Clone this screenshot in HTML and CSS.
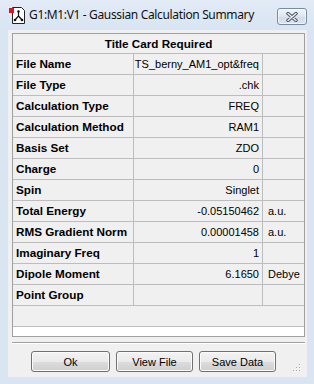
FILE: index.html
```html
<!DOCTYPE html>
<html>
<head>
<meta charset="utf-8">
<link rel="stylesheet" href="styles.css">
</head>
<body>
<div class="window">
  <div class="titlebar">
    <svg class="appicon" width="16" height="17" viewBox="0 0 16 17">
      <path d="M3.5 0.5 H12.5 L15.5 3.5 V16.5 H3.5 Z" fill="#fff" stroke="#222" stroke-width="1"/>
      <rect x="0" y="1" width="5" height="5" fill="#e0141e"/>
      <circle cx="9.5" cy="4.5" r="1.2" fill="#111"/>
      <path d="M9.5 4.5 V9 L6 13 M9.5 9 L13 13" stroke="#111" stroke-width="1.2" fill="none"/>
      <circle cx="6" cy="13" r="1.3" fill="#111"/>
      <circle cx="13" cy="13" r="1.3" fill="#111"/>
    </svg>
    <span class="title">G1:M1:V1 - Gaussian Calculation Summary</span>
    <div class="close">
      <svg width="12" height="10" viewBox="0 0 12 10">
        <path d="M2 1.5 L10 8.5 M10 1.5 L2 8.5" stroke="#4c5868" stroke-width="3.4" stroke-linecap="round"/>
        <path d="M2 1.5 L10 8.5 M10 1.5 L2 8.5" stroke="#eef1f5" stroke-width="1.4" stroke-linecap="round"/>
      </svg>
    </div>
  </div>
  <div class="client">
    <div class="grid">
      <div class="row title-row"><div class="cell span">Title Card Required</div></div>
      <div class="row"><div class="cell label">File Name</div><div class="cell value">TS_berny_AM1_opt&amp;freq</div><div class="cell unit"></div></div>
      <div class="row"><div class="cell label">File Type</div><div class="cell value">.chk</div><div class="cell unit"></div></div>
      <div class="row"><div class="cell label">Calculation Type</div><div class="cell value">FREQ</div><div class="cell unit"></div></div>
      <div class="row"><div class="cell label">Calculation Method</div><div class="cell value">RAM1</div><div class="cell unit"></div></div>
      <div class="row"><div class="cell label">Basis Set</div><div class="cell value">ZDO</div><div class="cell unit"></div></div>
      <div class="row"><div class="cell label">Charge</div><div class="cell value">0</div><div class="cell unit"></div></div>
      <div class="row"><div class="cell label">Spin</div><div class="cell value">Singlet</div><div class="cell unit"></div></div>
      <div class="row"><div class="cell label">Total Energy</div><div class="cell value">-0.05150462</div><div class="cell unit">a.u.</div></div>
      <div class="row"><div class="cell label">RMS Gradient Norm</div><div class="cell value">0.00001458</div><div class="cell unit">a.u.</div></div>
      <div class="row"><div class="cell label">Imaginary Freq</div><div class="cell value">1</div><div class="cell unit"></div></div>
      <div class="row"><div class="cell label">Dipole Moment</div><div class="cell value">6.1650</div><div class="cell unit">Debye</div></div>
      <div class="row"><div class="cell label">Point Group</div><div class="cell value"></div><div class="cell unit"></div></div>
      <div class="row blank-row"><div class="cell span"></div></div>
    </div>
    <div class="separator"></div>
    <div class="buttons">
      <button class="btn btn-ok">Ok</button>
      <button class="btn btn-view">View File</button>
      <button class="btn btn-save">Save Data</button>
    </div>
    <svg class="grip" width="8" height="8" viewBox="0 0 8 8">
      <rect x="6" y="0" width="1" height="1" fill="#a8a8a8"/>
      <rect x="3" y="3" width="1" height="1" fill="#a8a8a8"/>
      <rect x="6" y="3" width="1" height="1" fill="#a8a8a8"/>
      <rect x="0" y="6" width="1" height="1" fill="#a8a8a8"/>
      <rect x="3" y="6" width="1" height="1" fill="#a8a8a8"/>
      <rect x="6" y="6" width="1" height="1" fill="#a8a8a8"/>
      <rect x="7" y="1" width="1" height="1" fill="#fff"/>
      <rect x="4" y="4" width="1" height="1" fill="#fff"/>
      <rect x="7" y="4" width="1" height="1" fill="#fff"/>
      <rect x="1" y="7" width="1" height="1" fill="#fff"/>
      <rect x="4" y="7" width="1" height="1" fill="#fff"/>
      <rect x="7" y="7" width="1" height="1" fill="#fff"/>
    </svg>
  </div>
</div>
</body>
</html>
```
FILE: styles.css
```css
html, body {
  margin: 0;
  padding: 0;
}
body {
  font-family: "Liberation Sans", Arial, sans-serif;
  color: #000;
}
.window {
  width: 314px;
  height: 384px;
  box-sizing: border-box;
  padding: 0 7px 7px 8px;
  background: #d9e5f3;
  display: flex;
  flex-direction: column;
}
.titlebar {
  height: 30px;
  flex: none;
  display: flex;
  align-items: flex-start;
  background: linear-gradient(#e2ebf6, #d9e5f3);
  margin: 0 -7px 0 -8px;
  padding: 0 7px 0 8px;
}
.appicon {
  margin-top: 7px;
  margin-left: 1px;
  flex: none;
}
.title {
  margin-left: 4px;
  margin-top: 6px;
  font-family: "Noto Sans", "Open Sans", sans-serif;
  font-size: 12px;
  letter-spacing: -0.35px;
  line-height: 18px;
  color: #111;
  white-space: nowrap;
  flex: 1;
}
.close {
  margin-top: 8px;
  width: 30px;
  height: 17px;
  box-sizing: border-box;
  border: 1px solid #7a8aa0;
  border-radius: 3px;
  background: linear-gradient(#f1f5fa, #dde6f0 50%, #d2dce9 51%, #dbe4ef);
  box-shadow: inset 0 0 0 1px rgba(255,255,255,0.6);
  display: flex;
  align-items: center;
  justify-content: center;
  flex: none;
}
.client {
  flex: 1;
  background: #f0f0f0;
  padding: 3px 2px 0 4px;
  position: relative;
  display: flex;
  flex-direction: column;
}
.grid {
  border: 1px solid #a0a0a0;
  background: #fff;
  height: 304px;
  box-sizing: border-box;
  flex: none;
}
.row {
  display: grid;
  grid-template-columns: 121px 129px 41px;
  height: 21px;
  box-sizing: border-box;
  border-bottom: 1px solid #bdbdbd;
  background: #f0f0f0;
}
.title-row {
  height: 20px;
  grid-template-columns: 1fr;
}
.blank-row {
  grid-template-columns: 1fr;
}
.cell {
  box-sizing: border-box;
  border-right: 1px solid #bdbdbd;
  line-height: 20px;
  font-size: 11px;
  white-space: nowrap;
  overflow: hidden;
}
.cell.unit, .cell.span {
  border-right: none;
}
.title-row .cell {
  line-height: 19px;
  font-weight: bold;
  font-size: 11.7px;
  text-align: center;
}
.label {
  font-weight: bold;
  font-size: 11.7px;
  padding-left: 3px;
}
.value {
  text-align: right;
  padding-right: 3px;
}
.unit {
  padding-left: 5px;
}
.separator {
  margin-top: 5px;
  border-top: 1px solid #a0a0a0;
  border-bottom: 1px solid #fff;
  flex: none;
}
.buttons {
  margin-top: 7px;
  padding-left: 19px;
  display: flex;
  gap: 6px;
}
.btn {
  height: 21px;
  box-sizing: border-box;
  border: 1px solid #707070;
  border-radius: 3px;
  background: linear-gradient(#f2f2f2, #ebebeb 50%, #dddddd 51%, #cfcfcf);
  box-shadow: inset 0 0 0 1px #fbfbfb;
  font-family: "Liberation Sans", Arial, sans-serif;
  font-size: 11px;
  color: #000;
  padding: 0;
  margin: 0;
}
.btn-ok { width: 79px; }
.btn-view { width: 77px; }
.btn-save { width: 77px; }
.grip {
  position: absolute;
  right: 6px;
  bottom: 5px;
}
```
